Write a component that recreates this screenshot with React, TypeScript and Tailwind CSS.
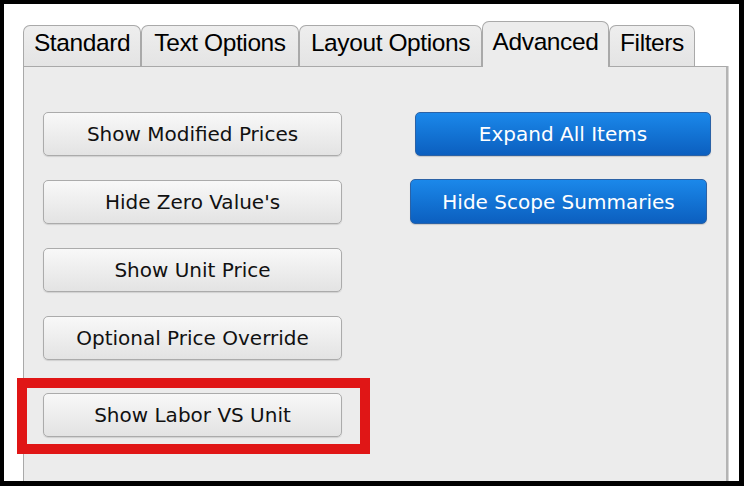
import React from "react";

const tabFont = { fontFamily: '"Liberation Sans", Arial, sans-serif' };
const btnFont = { fontFamily: '"DejaVu Sans", Verdana, sans-serif' };

function Tab({ label, active, className }: { label: string; active?: boolean; className: string }) {
  if (active) {
    return (
      <div
        style={tabFont}
        className={
          "relative z-10 -mb-px h-[46px] rounded-t-[7px] border border-b-0 border-[#a9a9a9] bg-[#ececec] pt-[7px] text-center text-[24.5px] leading-[26px] tracking-[-0.4px] text-black " +
          className
        }
      >
        {label}
      </div>
    );
  }
  return (
    <div
      style={tabFont}
      className={
        "h-[41px] rounded-t-[7px] border border-b-0 border-[#a9a9a9] bg-gradient-to-b from-[#eeeeee] to-[#e4e4e4] pt-[4px] text-center text-[24.5px] leading-[26px] tracking-[-0.4px] text-black " +
        className
      }
    >
      {label}
    </div>
  );
}

function GrayButton({ label }: { label: string }) {
  return (
    <div
      style={btnFont}
      className="flex h-[44px] w-[299px] items-center justify-center rounded-[5px] border border-[#ababab] bg-gradient-to-b from-[#f8f8f8] to-[#e3e3e3] text-[20px] text-[#111] shadow-[0_1px_1px_rgba(0,0,0,0.12)]"
    >
      {label}
    </div>
  );
}

function BlueButton({ label, className }: { label: string; className: string }) {
  return (
    <div
      style={btnFont}
      className={
        "flex items-center justify-center rounded-[5px] border border-[#2b62a6] bg-gradient-to-b from-[#1b88ea] to-[#0c5fbf] text-[20px] text-white shadow-[0_1px_1px_rgba(0,0,0,0.15)] " +
        className
      }
    >
      {label}
    </div>
  );
}

export default function App() {
  return (
    <div className="h-[486px] w-[744px] overflow-hidden bg-black pb-[5px] pl-[4px] pr-[5px] pt-[4px]">
      <div className="flex h-full w-full flex-col overflow-hidden bg-white">
        <div className="flex items-end pl-[19px] pt-[17px]">
          <Tab label="Standard" className="w-[118px]" />
          <Tab label="Text Options" className="w-[158px]" />
          <Tab label="Layout Options" className="w-[183px]" />
          <Tab label="Advanced" active className="w-[127px]" />
          <Tab label="Filters" className="w-[86px]" />
        </div>
        <div className="ml-[19px] h-[460px] w-[705px] shrink-0 border border-r-[2px] border-[#a9a9a9] border-r-[#b4b4b4] bg-[#ececec] pl-[19px] pt-[45px] shadow-[1px_0_0_#d6d6d6]">
          <div className="flex">
            <div className="flex flex-col">
              <GrayButton label="Show Modified Prices" />
              <div className="mt-[24px]">
                <GrayButton label="Hide Zero Value's" />
              </div>
              <div className="mt-[24px]">
                <GrayButton label="Show Unit Price" />
              </div>
              <div className="mt-[24px]">
                <GrayButton label="Optional Price Override" />
              </div>
              <div className="-ml-[26px] mt-[18px] w-[353px] border-[10px] border-[#e01616] pb-[7px] pl-[16px] pt-[5px]">
                <GrayButton label="Show Labor VS Unit" />
              </div>
            </div>
            <div className="ml-[40px] flex flex-col">
              <BlueButton label="Expand All Items" className="ml-[5px] h-[44px] w-[296px]" />
              <BlueButton label="Hide Scope Summaries" className="mt-[23px] h-[45px] w-[297px]" />
            </div>
          </div>
        </div>
      </div>
    </div>
  );
}
